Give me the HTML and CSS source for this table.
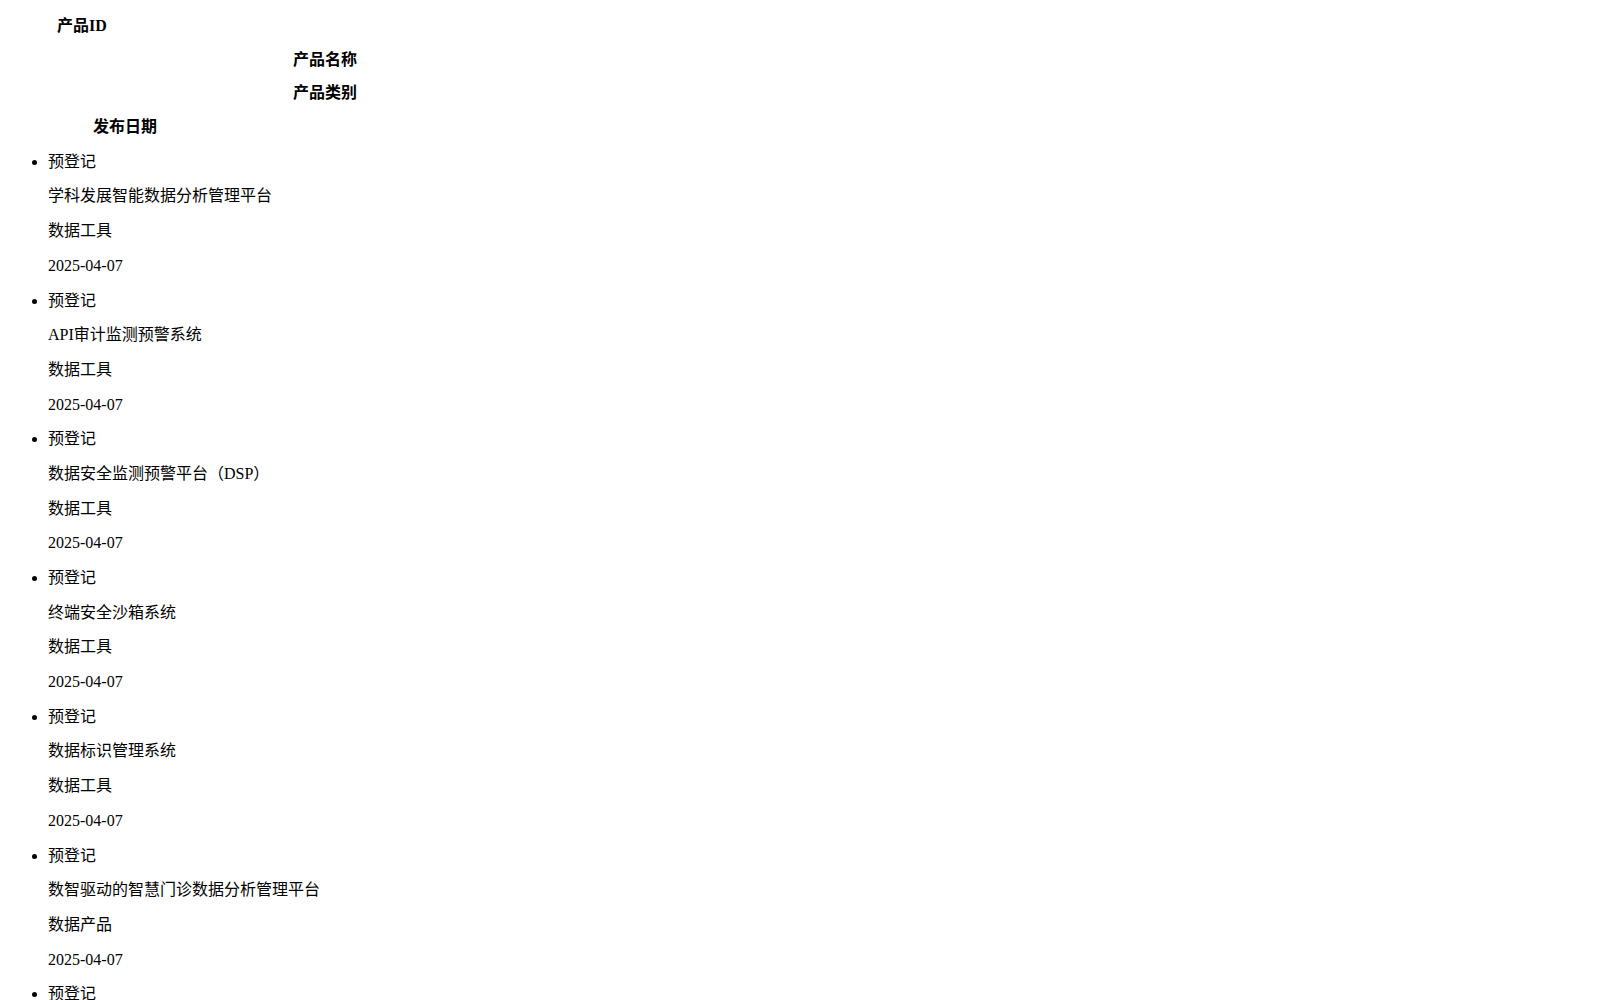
FILE: index.html
```html
<!DOCTYPE html>
<html lang="zh-CN">
<head>
<meta charset="utf-8">
<title>产品列表</title>
<link rel="stylesheet" href="styles.css">
</head>
<body>
<div class="thead">
  <p class="th th-id">产品ID</p>
  <p class="th th-name">产品名称</p>
  <p class="th th-cat">产品类别</p>
  <p class="th th-date">发布日期</p>
</div>
<ul class="list">
  <li><p>预登记</p><p>学科发展智能数据分析管理平台</p><p>数据工具</p><p>2025-04-07</p></li>
  <li><p>预登记</p><p>API审计监测预警系统</p><p>数据工具</p><p>2025-04-07</p></li>
  <li><p>预登记</p><p>数据安全监测预警平台（DSP）</p><p>数据工具</p><p>2025-04-07</p></li>
  <li><p>预登记</p><p>终端安全沙箱系统</p><p>数据工具</p><p>2025-04-07</p></li>
  <li><p>预登记</p><p>数据标识管理系统</p><p>数据工具</p><p>2025-04-07</p></li>
  <li><p>预登记</p><p>数智驱动的智慧门诊数据分析管理平台</p><p>数据产品</p><p>2025-04-07</p></li>
  <li><p>预登记</p><p>医疗健康数据治理平台</p><p>数据工具</p><p>2025-04-07</p></li>
  <li><p>预登记</p><p>企业数据资产管理系统</p><p>数据工具</p><p>2025-04-07</p></li>
  <li><p>预登记</p><p>智慧园区数据服务平台</p><p>数据产品</p><p>2025-04-07</p></li>
  <li><p>预登记</p><p>数据脱敏处理系统</p><p>数据工具</p><p>2025-04-07</p></li>
  <li><p>预登记</p><p>交通出行数据分析平台</p><p>数据产品</p><p>2025-04-07</p></li>
  <li><p>预登记</p><p>数据质量检测系统</p><p>数据工具</p><p>2025-04-07</p></li>
</ul>
</body>
</html>
```

FILE: styles.css
```css
body {
  font-family: "Liberation Serif", "Noto Sans CJK SC", serif;
  font-size: 16px;
  color: #000;
  background: #fff;
}
.th {
  font-weight: bold;
  line-height: 17.7px;
  height: 17.7px;
}
.th-id {
  padding-left: 49px;
  margin-top: 9px;
}
.th-name,
.th-cat {
  padding-left: 285px;
}
.th-date {
  padding-left: 85px;
}
.list {
  margin-top: 17px;
}
.list p {
  line-height: 18.7px;
  height: 18.7px;
}
```
